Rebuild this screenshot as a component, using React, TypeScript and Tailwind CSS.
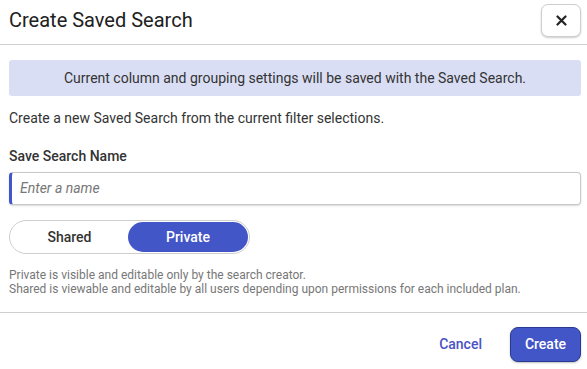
import React from "react";

export default function App() {
  return (
    <div className="w-[587px] h-[369px] bg-white overflow-hidden text-[#212121]" style={{ fontFamily: "Roboto, 'Liberation Sans', sans-serif" }}>
      <div className="h-[45px] border-b border-[#cfcfcf] flex items-start justify-between pl-[9px] pr-[6px]">
        <h1 className="text-[20px] leading-[24px] mt-[8px] text-[#212121]">Create Saved Search</h1>
        <button className="mt-[4px] w-[40px] h-[33px] rounded-[7px] border border-[#cfcfcf] shadow-[0_1px_2px_rgba(0,0,0,0.2)] flex items-center justify-center bg-white">
          <svg width="11" height="11" viewBox="0 0 11 11">
            <path d="M1.5 1.5L9.5 9.5M9.5 1.5L1.5 9.5" stroke="#222" strokeWidth="2.2" strokeLinecap="round" />
          </svg>
        </button>
      </div>
      <div className="pl-[9px] pr-[6px]">
        <div className="mt-[15px] h-[36px] rounded-[3px] bg-[#dadef4] flex items-center justify-center text-[14px] text-[#333]">
          Current column and grouping settings will be saved with the Saved Search.
        </div>
        <p className="mt-[13px] text-[14px] leading-[18px] text-[#333]">
          Create a new Saved Search from the current filter selections.
        </p>
        <label className="block mt-[20px] text-[14px] leading-[18px] font-medium text-[#333]">Save Search Name</label>
        <div className="mt-[7px] h-[33px] rounded-[4px] border border-[#c8c8c8] border-l-[3px] border-l-[#4356c8] shadow-[0_1px_2px_rgba(0,0,0,0.15)] flex items-center pl-[8px]">
          <span className="italic text-[14px] text-[#777]">Enter a name</span>
        </div>
        <div className="mt-[15px] w-[241px] h-[34px] rounded-full border border-[#cfcfcf] flex items-center p-[1px]">
          <div className="flex-1 h-full flex items-center justify-center text-[14px] font-medium text-[#333]">Shared</div>
          <div className="w-[120px] h-full rounded-full bg-[#4356c8] flex items-center justify-center text-[14px] font-medium text-white">Private</div>
        </div>
        <div className="mt-[14px] text-[12px] leading-[14px] text-[#777]">
          <div>Private is visible and editable only by the search creator.</div>
          <div>Shared is viewable and editable by all users depending upon permissions for each included plan.</div>
        </div>
      </div>
      <div className="mt-[16px] border-t border-[#cfcfcf] flex justify-end items-center pr-[6px] pt-[14px] gap-[28px]">
        <button className="text-[14px] font-medium text-[#4a52c4]">Cancel</button>
        <button className="w-[71px] h-[35px] rounded-[8px] bg-[#4356c8] border border-[#2a3a90] text-white text-[14px] font-medium shadow-[0_1px_2px_rgba(0,0,0,0.25)]">Create</button>
      </div>
    </div>
  );
}
